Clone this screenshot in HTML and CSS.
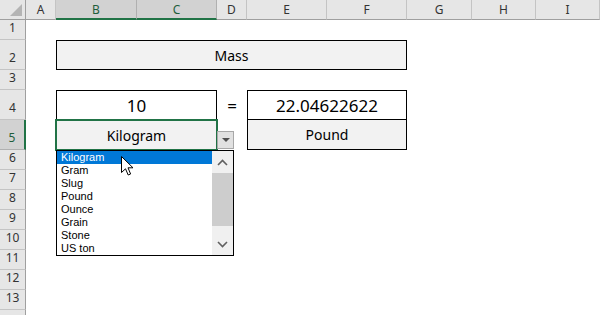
FILE: index.html
```html
<!DOCTYPE html>
<html>
<head>
    <title>Mass Converter</title>
    <link rel="stylesheet" href="styles.css">
</head>
<body>
    <div class="sheet">
        <div class="corner"><span class="corner-mark"></span></div>
        <div class="col-head">A</div>
        <div class="col-head active">B</div>
        <div class="col-head active">C</div>
        <div class="col-head">D</div>
        <div class="col-head">E</div>
        <div class="col-head">F</div>
        <div class="col-head">G</div>
        <div class="col-head">H</div>
        <div class="col-head">I</div>

        <div class="row-head">1</div>
        <div class="row-head">2</div>
        <div class="row-head">3</div>
        <div class="row-head">4</div>
        <div class="row-head active">5</div>
        <div class="row-head">6</div>
        <div class="row-head">7</div>
        <div class="row-head">8</div>
        <div class="row-head">9</div>
        <div class="row-head">10</div>
        <div class="row-head">11</div>
        <div class="row-head">12</div>
        <div class="row-head">13</div>
        <div class="row-head"></div>

        <div class="cell title">Mass</div>
        <div class="cell value value-in">10</div>
        <div class="cell equals">=</div>
        <div class="cell value value-out">22.04622622</div>
        <div class="cell unit unit-in">Kilogram</div>
        <div class="cell unit unit-out">Pound</div>

        <div class="drop-btn"><span class="drop-arrow"></span></div>

        <div class="dropdown">
            <ul class="options">
                <li class="selected">Kilogram</li>
                <li>Gram</li>
                <li>Slug</li>
                <li>Pound</li>
                <li>Ounce</li>
                <li>Grain</li>
                <li>Stone</li>
                <li>US ton</li>
            </ul>
            <div class="scrollbar">
                <div class="scroll-btn">
                    <svg width="11" height="7" viewBox="0 0 11 7"><polyline points="1,6 5.5,1.5 10,6" fill="none" stroke="#606060" stroke-width="1.6"/></svg>
                </div>
                <div class="scroll-track"><div class="scroll-thumb"></div></div>
                <div class="scroll-btn">
                    <svg width="11" height="7" viewBox="0 0 11 7"><polyline points="1,1 5.5,5.5 10,1" fill="none" stroke="#606060" stroke-width="1.6"/></svg>
                </div>
            </div>
        </div>

        <svg class="pointer" width="14" height="21" viewBox="0 0 14 21">
            <path d="M0.5,0.5 L0.5,16.5 L4.5,12.8 L7.2,19 L9.6,18 L7,11.8 L12,11.8 Z" fill="#fff" stroke="#000" stroke-width="1"/>
        </svg>
    </div>
</body>
</html>
```

FILE: styles.css
```css
html, body {
    margin: 0;
    overflow: hidden;
}

body {
    width: 600px;
    height: 315px;
    background-color: #ffffff;
    font-family: "Noto Sans", "Open Sans", sans-serif;
    color: #000000;
}

.sheet {
    position: relative;
    display: grid;
    grid-template-columns: 26px 30px 81px 80px 30px 80px 80px 65px 64px 64px;
    grid-template-rows: 20px 20px 30px 20px 30px 30px repeat(9, 20px);
}

.corner {
    position: relative;
    background-color: #e6e6e6;
    border-right: 1px solid #9f9f9f;
    border-bottom: 1px solid #9f9f9f;
}

.corner-mark {
    position: absolute;
    right: 3px;
    bottom: 3px;
    width: 0;
    height: 0;
    border-left: 12px solid transparent;
    border-bottom: 12px solid #b4b4b4;
}

.col-head {
    display: flex;
    align-items: center;
    justify-content: center;
    background-color: #e6e6e6;
    border-right: 1px solid #c4c4c4;
    border-bottom: 1px solid #9f9f9f;
    font-size: 12px;
    color: #333333;
}

.col-head.active {
    background-color: #d2d2d2;
    border-right-color: #b0b0b0;
    border-bottom: 2px solid #217346;
    color: #1e5e3b;
}

.row-head {
    grid-column: 1;
    display: flex;
    align-items: flex-end;
    justify-content: center;
    padding-bottom: 3px;
    background-color: #e6e6e6;
    border-right: 1px solid #9f9f9f;
    border-bottom: 1px solid #c4c4c4;
    font-size: 12px;
    color: #333333;
}

.row-head.active {
    background-color: #d2d2d2;
    border-right: 2px solid #217346;
    border-bottom-color: #b0b0b0;
    color: #1e5e3b;
}

.cell {
    display: flex;
    align-items: center;
    justify-content: center;
    box-sizing: border-box;
}

.title {
    grid-column: 3 / 8;
    grid-row: 3;
    background-color: #f2f2f2;
    border: 1px solid #000000;
    font-size: 14px;
}

.value {
    font-size: 17px;
    border: 1px solid #000000;
    background-color: #ffffff;
}

.value-in {
    grid-column: 3 / 5;
    grid-row: 5;
}

.value-out {
    grid-column: 6 / 8;
    grid-row: 5;
}

.equals {
    grid-column: 5;
    grid-row: 5;
    font-size: 17px;
}

.unit {
    font-size: 14px;
    background-color: #f2f2f2;
}

.unit-in {
    grid-column: 3 / 5;
    grid-row: 6;
    margin: -1px -1px -1px -1px;
    border: 2px solid #217346;
}

.unit-out {
    grid-column: 6 / 8;
    grid-row: 6;
    border: 1px solid #000000;
    border-top: 0;
}

.drop-btn {
    position: absolute;
    left: 217px;
    top: 131px;
    width: 17px;
    height: 18px;
    box-sizing: border-box;
    display: flex;
    align-items: center;
    justify-content: center;
    background-color: #e1e1e1;
    border: 1px solid #a8a8a8;
}

.drop-arrow {
    width: 0;
    height: 0;
    border-left: 4px solid transparent;
    border-right: 4px solid transparent;
    border-top: 4px solid #505050;
}

.dropdown {
    position: absolute;
    left: 56px;
    top: 150px;
    width: 178px;
    height: 106px;
    box-sizing: border-box;
    display: flex;
    background-color: #ffffff;
    border: 1px solid #000000;
}

.options {
    flex: 1;
    margin: 0;
    padding: 0;
    list-style: none;
    font-family: "Liberation Sans", Arial, sans-serif;
}

.options li {
    height: 13px;
    line-height: 13px;
    padding-left: 4px;
    font-size: 11px;
}

.options li.selected {
    background-color: #0078d7;
    color: #ffffff;
}

.scrollbar {
    width: 21px;
    display: flex;
    flex-direction: column;
    background-color: #f0f0f0;
}

.scroll-btn {
    height: 22px;
    display: flex;
    align-items: center;
    justify-content: center;
}

.scroll-track {
    flex: 1;
}

.scroll-thumb {
    height: 53px;
    background-color: #cdcdcd;
}

.pointer {
    position: absolute;
    left: 121px;
    top: 156px;
}
```
